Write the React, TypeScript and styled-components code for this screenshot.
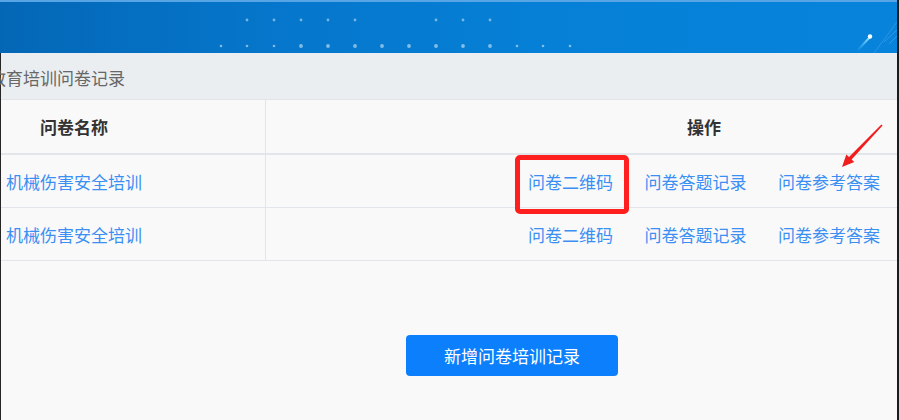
import styled, { createGlobalStyle } from "styled-components";

const GlobalStyle = createGlobalStyle`
  html, body {
    margin: 0;
    padding: 0;
    background: #f9f9f9;
  }
  body {
    font-family: "Noto Sans CJK SC", "Noto Sans", sans-serif;
  }
`;

const Frame = styled.div`
  position: relative;
  width: 897px;
  height: 420px;
  border-right: 2px solid #1c1c1c;
  display: flex;
  flex-direction: column;
  overflow: hidden;
  background: #f9f9f9;
`;

const Banner = styled.div`
  height: 51px;
  border-top: 2px solid #57a5e4;
  background: linear-gradient(90deg, #0467b6 0%, #0576cb 30%, #0580d6 60%, #0883dc 100%);
  flex-shrink: 0;
`;

const Main = styled.div`
  flex: 1;
  display: flex;
  flex-direction: column;
  border-left: 1px solid #262626;
`;

const Breadcrumb = styled.div`
  height: 47px;
  background: #eaeef1;
  display: flex;
  align-items: center;
  border-bottom: 1px solid #e1e5e9;
  box-sizing: border-box;
`;

const Crumb = styled.span`
  margin-left: -12px;
  padding-top: 2px;
  font-size: 17px;
  color: #676767;
`;

const Row = styled.div<{ $height: number; $line: number }>`
  display: grid;
  grid-template-columns: 265px 1fr;
  height: ${(p) => p.$height}px;
  border-bottom: ${(p) => p.$line}px solid #e2e6ea;
`;

const NameCell = styled.div<{ $head?: boolean }>`
  display: flex;
  align-items: center;
  justify-content: center;
  padding-right: 118px;
  border-right: 1px solid #e2e6ea;
  font-size: 17px;
  font-weight: ${(p) => (p.$head ? 700 : 400)};
  color: ${(p) => (p.$head ? "#333" : "#3b8ff3")};
  white-space: nowrap;
`;

const OpsCell = styled.div`
  display: flex;
  align-items: center;
  justify-content: flex-end;
  padding-right: 17px;
`;

const OpsGroup = styled.div<{ $head?: boolean }>`
  width: 352px;
  display: flex;
  justify-content: ${(p) => (p.$head ? "center" : "space-between")};
  font-size: 17px;
  font-weight: ${(p) => (p.$head ? 700 : 400)};
  color: #333;
`;

const LinkText = styled.a`
  color: #3b8ff3;
  text-decoration: none;
  white-space: nowrap;
  cursor: pointer;
`;

const Footer = styled.div`
  padding: 74px 0 0 405px;
`;

const AddButton = styled.button`
  width: 212px;
  height: 41px;
  border: none;
  border-radius: 4px;
  background: #0b7ffc;
  color: #fff;
  font-family: inherit;
  font-size: 17px;
  cursor: pointer;
`;

const Highlight = styled.div`
  position: absolute;
  left: 515px;
  top: 155px;
  width: 114px;
  height: 59px;
  box-sizing: border-box;
  border: 5px solid #ff1f1f;
  border-radius: 5px;
  pointer-events: none;
`;

const Arrow = styled.svg`
  position: absolute;
  left: 830px;
  top: 118px;
  pointer-events: none;
`;

const rowOneDots = [247, 274, 301, 328, 355, 436, 463, 490];
const rowTwoDots = [221, 247, 274, 301, 328, 355, 382, 409, 436, 463, 490, 517, 543, 570];

const BannerArt = () => (
  <svg width="897" height="51" viewBox="0 0 897 51">
    <defs>
      <linearGradient id="comet" x1="0" y1="1" x2="1" y2="0">
        <stop offset="0" stopColor="#4fd2ff" stopOpacity="0" />
        <stop offset="1" stopColor="#9fe6ff" stopOpacity="1" />
      </linearGradient>
    </defs>
    {rowOneDots.map((x) => (
      <circle key={`a${x}`} cx={x} cy={18} r={1.4} fill="#ffffff" opacity={0.45} />
    ))}
    {rowTwoDots.map((x, i) => (
      <circle
        key={`b${x}`}
        cx={x}
        cy={44}
        r={i > 2 && i < 11 ? 1.9 : 1.3}
        fill="#ffffff"
        opacity={0.5}
      />
    ))}
    <path d="M 857 49 L 870 35" stroke="url(#comet)" strokeWidth="2" strokeLinecap="round" />
    <circle cx={870} cy={34.5} r={2.2} fill="#ffffff" />
    <path d="M 874 51 L 897 20" stroke="#4aa8ee" strokeWidth="1" opacity={0.5} />
    <path d="M 884 40 L 897 28" stroke="#5ab4f2" strokeWidth="1" opacity={0.45} />
    <path d="M 889 42 L 897 34" stroke="#5ab4f2" strokeWidth="1" opacity={0.45} />
  </svg>
);

const records = ["机械伤害安全培训", "机械伤害安全培训"];
const actions = ["问卷二维码", "问卷答题记录", "问卷参考答案"];

const App = () => {
  return (
    <>
      <GlobalStyle />
      <Frame>
        <Banner>
          <BannerArt />
        </Banner>
        <Main>
          <Breadcrumb>
            <Crumb>教育培训问卷记录</Crumb>
          </Breadcrumb>
          <Row $height={53} $line={2}>
            <NameCell $head>问卷名称</NameCell>
            <OpsCell>
              <OpsGroup $head>操作</OpsGroup>
            </OpsCell>
          </Row>
          {records.map((name, i) => (
            <Row key={i} $height={52} $line={1}>
              <NameCell>{name}</NameCell>
              <OpsCell>
                <OpsGroup>
                  {actions.map((a) => (
                    <LinkText key={a}>{a}</LinkText>
                  ))}
                </OpsGroup>
              </OpsCell>
            </Row>
          ))}
          <Footer>
            <AddButton>新增问卷培训记录</AddButton>
          </Footer>
        </Main>
        <Highlight />
        <Arrow width="60" height="60" viewBox="0 0 60 60">
          <polygon
            points="51.4,6.45 19,39.1 16.3,36.5 12,49 24.3,44.1 21.6,41.5 52.6,7.55"
            fill="#f21d1d"
          />
        </Arrow>
      </Frame>
    </>
  );
};

export default App;
